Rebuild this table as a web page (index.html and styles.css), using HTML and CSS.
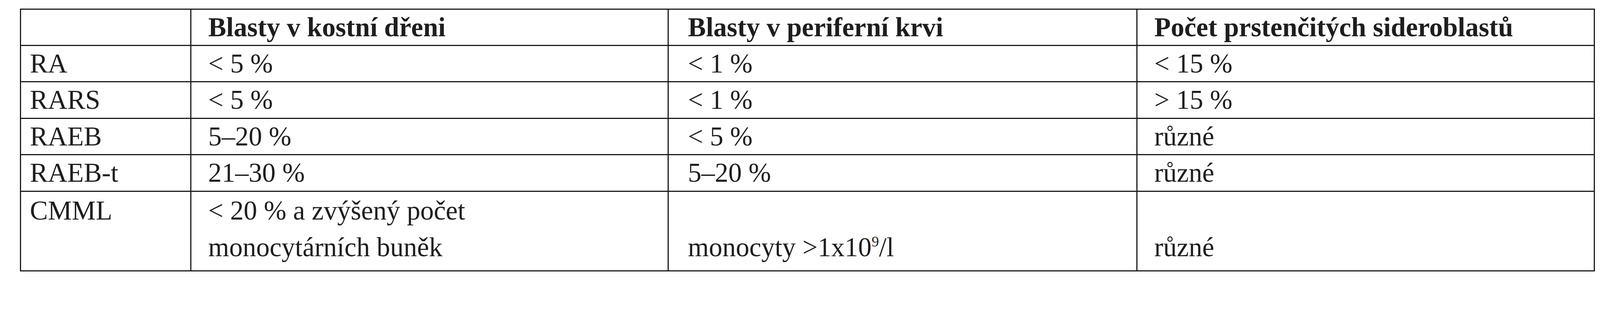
FILE: index.html
```html
<!DOCTYPE html>
<html lang="cs">
<head>
<meta charset="utf-8">
<title>Klasifikace MDS</title>
<link rel="stylesheet" href="styles.css">
</head>
<body>
<div class="page">
  <table class="mds">
    <colgroup>
      <col class="c1">
      <col class="c2">
      <col class="c3">
      <col class="c4">
    </colgroup>
    <thead>
      <tr class="row">
        <th class="k1"></th>
        <th class="k2">Blasty v kostní dřeni</th>
        <th class="k3">Blasty v periferní krvi</th>
        <th class="k4">Počet prstenčitých sideroblastů</th>
      </tr>
    </thead>
    <tbody>
      <tr class="row">
        <td class="k1">RA</td>
        <td class="k2">&lt; 5 %</td>
        <td class="k3">&lt; 1 %</td>
        <td class="k4">&lt; 15 %</td>
      </tr>
      <tr class="row">
        <td class="k1">RARS</td>
        <td class="k2">&lt; 5 %</td>
        <td class="k3">&lt; 1 %</td>
        <td class="k4">&gt; 15 %</td>
      </tr>
      <tr class="row">
        <td class="k1">RAEB</td>
        <td class="k2">5–20 %</td>
        <td class="k3">&lt; 5 %</td>
        <td class="k4">různé</td>
      </tr>
      <tr class="row">
        <td class="k1">RAEB-t</td>
        <td class="k2">21–30 %</td>
        <td class="k3">5–20 %</td>
        <td class="k4">různé</td>
      </tr>
      <tr class="row tall">
        <td class="k1 top">CMML</td>
        <td class="k2 top">&lt; 20 % a zvýšený počet<br>monocytárních buněk</td>
        <td class="k3 bottom">monocyty &gt;1x10<sup class="exp">9</sup>/l</td>
        <td class="k4 bottom">různé</td>
      </tr>
    </tbody>
  </table>
</div>
</body>
</html>
```

FILE: styles.css
```css
html, body {
  margin: 0;
  padding: 0;
  background: #ffffff;
}

.page {
  padding: 21.5px 0 0 51.1px;
}

.mds {
  border-collapse: separate;
  border-spacing: 0;
  table-layout: fixed;
  width: 4031.7px;
  border-top: 3.6px solid #1c1c1c;
  border-left: 3.6px solid #1c1c1c;
  font-family: "Liberation Serif", "Times New Roman", serif;
  font-size: 69px;
  color: #1e1e1e;
}

.c1 { width: 435.9px; }
.c2 { width: 1221.6px; }
.c3 { width: 1200.1px; }
.c4 { width: 1170.5px; }

.mds th,
.mds td {
  box-sizing: border-box;
  border-right: 3.6px solid #1c1c1c;
  border-bottom: 3.6px solid #1c1c1c;
  padding: 0;
  line-height: 90.4px;
  text-align: left;
  vertical-align: middle;
  white-space: nowrap;
}

.mds th {
  font-weight: bold;
}

.mds .k1 { padding-left: 22.4px; }
.mds .k2 { padding-left: 43px; }
.mds .k3 { padding-left: 49.3px; }
.mds .k4 { padding-left: 43px; }

.mds .tall td {
  line-height: 93.3px;
  padding-top: 2.7px;
  padding-bottom: 11.7px;
}

.mds .top {
  vertical-align: top;
}

.mds .bottom {
  vertical-align: bottom;
}

.exp {
  font-size: 0.55em;
  line-height: 0;
  vertical-align: 25px;
}
```
